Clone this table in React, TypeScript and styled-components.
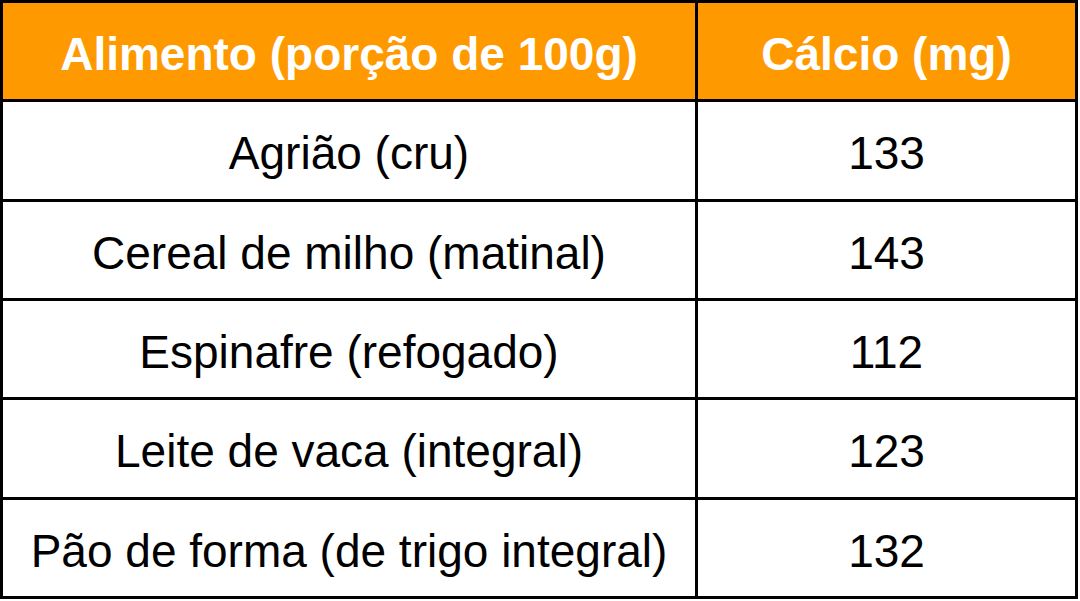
import React from 'react';
import styled, { createGlobalStyle } from 'styled-components';

const rows: [string, string][] = [
  ['Agrião (cru)', '133'],
  ['Cereal de milho (matinal)', '143'],
  ['Espinafre (refogado)', '112'],
  ['Leite de vaca (integral)', '123'],
  ['Pão de forma (de trigo integral)', '132'],
];

const GlobalStyle = createGlobalStyle`
  html, body {
    margin: 0;
    padding: 0;
    background: #ffffff;
  }
`;

const Table = styled.div`
  width: 1078px;
  height: 599px;
  box-sizing: border-box;
  display: grid;
  grid-template-columns: 692px 1fr;
  grid-template-rows: repeat(6, 1fr);
  gap: 3px;
  padding: 3px;
  background: #000000;
  font-family: 'Liberation Sans', Arial, sans-serif;
  font-size: 46px;
`;

const Cell = styled.div<{ $head?: boolean }>`
  display: flex;
  align-items: center;
  justify-content: center;
  padding-top: 6px;
  background: ${({ $head }) => ($head ? '#ff9900' : '#ffffff')};
  color: ${({ $head }) => ($head ? '#ffffff' : '#000000')};
  font-weight: ${({ $head }) => ($head ? 700 : 400)};
  white-space: nowrap;
`;

const App = () => (
  <>
    <GlobalStyle />
    <Table>
      <Cell $head>Alimento (porção de 100g)</Cell>
      <Cell $head>Cálcio (mg)</Cell>
      {rows.map(([food, value]) => (
        <React.Fragment key={food}>
          <Cell>{food}</Cell>
          <Cell>{value}</Cell>
        </React.Fragment>
      ))}
    </Table>
  </>
);

export default App;
